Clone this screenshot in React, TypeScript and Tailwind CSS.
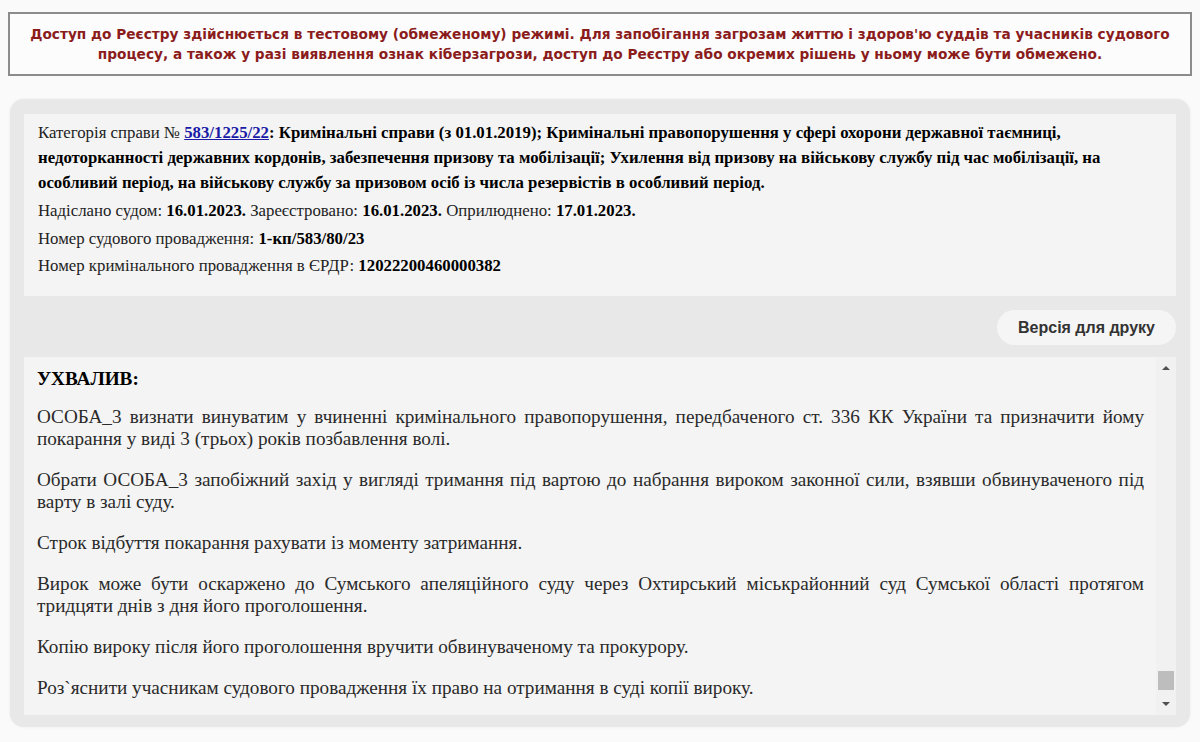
import React from "react";

const serif = { fontFamily: '"Liberation Serif", "Times New Roman", serif' };

function ScrollBar() {
  return (
    <div className="flex w-[20px] shrink-0 flex-col bg-[#f1f1f1]">
      <div className="flex h-[22px] items-center justify-center">
        <div className="h-0 w-0 border-x-[4px] border-b-[4px] border-x-transparent border-b-[#505050]" />
      </div>
      <div className="flex flex-1 flex-col justify-end items-center pb-[3px]">
        <div className="h-[19px] w-[16px] bg-[#bdbdbd]" />
      </div>
      <div className="flex h-[22px] items-center justify-center">
        <div className="h-0 w-0 border-x-[4px] border-t-[4px] border-x-transparent border-t-[#505050]" />
      </div>
    </div>
  );
}

export default function App() {
  const paragraphs = [
    "ОСОБА_3 визнати винуватим у вчиненні кримінального правопорушення, передбаченого ст. 336 КК України та призначити йому покарання у виді 3 (трьох) років позбавлення волі.",
    "Обрати ОСОБА_3 запобіжний захід у вигляді тримання під вартою до набрання вироком законної сили, взявши обвинуваченого під варту в залі суду.",
    "Строк відбуття покарання рахувати із моменту затримання.",
    "Вирок може бути оскаржено до Сумського апеляційного суду через Охтирський міськрайонний суд Сумської області протягом тридцяти днів з дня його проголошення.",
    "Копію вироку після його проголошення вручити обвинуваченому та прокурору.",
    "Роз`яснити учасникам судового провадження їх право на отримання в суді копії вироку.",
  ];

  return (
    <div className="min-h-screen bg-[#fafafa] px-2 pt-3 pb-3">
      {/* попередження */}
      <div
        className="border-2 border-[#8c8c8c] bg-[#fcfcfc] py-[10px] text-center text-[13.7px] font-bold leading-[20px] text-[#8b1c1c]"
        style={{ fontFamily: '"DejaVu Sans", Verdana, sans-serif' }}
      >
        Доступ до Реєстру здійснюється в тестовому (обмеженому) режимі. Для запобігання загрозам життю і здоров'ю суддів та учасників судового
        <br />
        процесу, а також у разі виявлення ознак кіберзагрози, доступ до Реєстру або окремих рішень у ньому може бути обмежено.
      </div>

      {/* панель документа */}
      <div className="mx-[2px] mt-[23px] rounded-[14px] bg-[#e8e8e8] px-[14px] pt-[15px] pb-[12px] shadow-[0_0_3px_rgba(0,0,0,0.06)]">
        <div className="bg-[#f4f4f4] px-[14px] pt-[6px] pb-[18px] text-[16.8px] text-[#222]" style={serif}>
          <div className="leading-[25px]">
            Категорія справи №{" "}
            <a href="#" className="font-bold text-[#1a1aa6] underline">
              583/1225/22
            </a>
            <b className="text-black">
              : Кримінальні справи (з 01.01.2019); Кримінальні правопорушення у сфері охорони державної таємниці, недоторканності державних кордонів, забезпечення призову та мобілізації; Ухилення від призову на військову службу під час мобілізації, на особливий період, на військову службу за призовом осіб із числа резервістів в особливий період.
            </b>
          </div>
          <div className="mt-[3px] leading-[25px]">
            Надіслано судом: <b className="text-black">16.01.2023.</b> Зареєстровано: <b className="text-black">16.01.2023.</b> Оприлюднено:{" "}
            <b className="text-black">17.01.2023.</b>
          </div>
          <div className="mt-[3px] leading-[25px]">
            Номер судового провадження: <b className="text-black">1-кп/583/80/23</b>
          </div>
          <div className="mt-[2px] leading-[25px]">
            Номер кримінального провадження в ЄРДР: <b className="text-black">12022200460000382</b>
          </div>
        </div>

        <div className="mt-[14px] mb-[12px] flex justify-end">
          <button
            className="h-[35px] w-[179px] rounded-full bg-[#f5f5f5] text-[16px] font-bold text-[#333]"
            style={{ fontFamily: '"Liberation Sans", Arial, sans-serif' }}
          >
            Версія для друку
          </button>
        </div>

        <div className="flex h-[358px] bg-[#f4f4f4]">
          <div
            className="flex flex-1 flex-col justify-end overflow-hidden pl-[13px] pr-[12px] pb-[16px] text-[19.2px] leading-[22px] text-[#2a2a2a]"
            style={serif}
          >
            <p className="mb-[16px] font-bold text-black">УХВАЛИВ:</p>
            <div className="flex flex-col gap-[19px]">
              {paragraphs.map((p, i) => (
                <p key={i} className="text-justify">
                  {p}
                </p>
              ))}
            </div>
          </div>
          <ScrollBar />
        </div>
      </div>
    </div>
  );
}
